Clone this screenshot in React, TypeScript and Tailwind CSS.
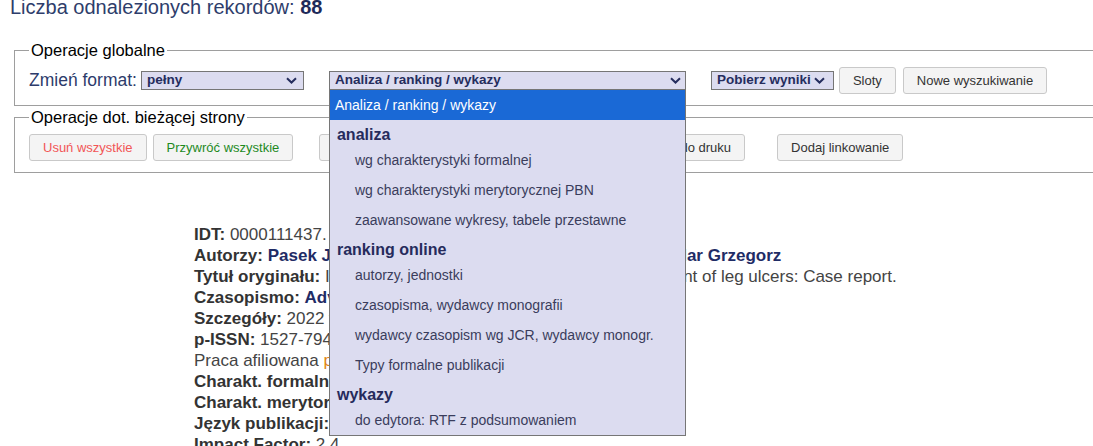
import React from "react";

const Chevron = ({ color = "#252d5e" }: { color?: string }) => (
  <svg width="11" height="7" viewBox="0 0 11 7" className="shrink-0">
    <path d="M1 1.2l4.5 4.3L10 1.2" fill="none" stroke={color} strokeWidth="2" />
  </svg>
);

const Button = ({ children, className = "", color = "text-[#333]" }: any) => (
  <button
    className={`h-[27px] whitespace-nowrap rounded-[3px] border border-[#c9c9c9] bg-[#f4f4f4] px-[13px] text-[13px] leading-none ${color} ${className}`}
  >
    {children}
  </button>
);

const Group = ({ label }: { label: string }) => (
  <div className="h-[25px] pl-[7px] pt-[6px] text-[16px] font-bold leading-[18px] text-[#262b5c]">
    {label}
  </div>
);

const Item = ({ label }: { label: string }) => (
  <div className="flex h-[30px] items-center pl-[25px] text-[14px] text-[#3a3d5c]">{label}</div>
);

const AnalizaSelect = () => (
  <div className="relative ml-[25px] w-[357px]">
    <div className="flex h-[19px] items-center justify-between border border-[#767676] bg-[#dcdcf0] pl-[5px] pr-[4px] text-[13.5px] font-bold text-[#252d5e]">
      <span>Analiza / ranking / wykazy</span>
      <Chevron />
    </div>
    <div className="absolute left-0 right-0 top-[18px] z-10 border border-[#767676] bg-[#dcdcf0]">
      <div className="flex h-[30px] items-center bg-[#1a69d6] pl-[5px] text-[14px] text-white">
        Analiza / ranking / wykazy
      </div>
      <Group label="analiza" />
      <Item label="wg charakterystyki formalnej" />
      <Item label="wg charakterystyki merytorycznej PBN" />
      <Item label="zaawansowane wykresy, tabele przestawne" />
      <Group label="ranking online" />
      <Item label="autorzy, jednostki" />
      <Item label="czasopisma, wydawcy monografii" />
      <Item label="wydawcy czasopism wg JCR, wydawcy monogr." />
      <Item label="Typy formalne publikacji" />
      <Group label="wykazy" />
      <Item label="do edytora: RTF z podsumowaniem" />
    </div>
  </div>
);

const Line = ({ children }: any) => <div className="whitespace-nowrap">{children}</div>;
const L = ({ children }: any) => <span className="font-bold text-[#333]">{children}</span>;

export default function App() {
  return (
    <div className="h-[446px] w-full overflow-hidden bg-white [font-family:Liberation_Sans,Arial,sans-serif]">
      <div className="-mt-[4px] pl-[10px] text-[20px] leading-[23px] text-[#2e3d6b]">
        Liczba odnalezionych rekordów: <span className="font-bold text-[#1e2a5a]">88</span>
      </div>

      <fieldset className="ml-[14px] mt-[22px] w-[1120px] border border-[#9e9e9e] pb-[11px] pl-[14px] pt-[7px]">
        <legend className="px-[2px] text-[16.5px] leading-[19px] text-black">Operacje globalne</legend>
        <div className="flex h-[27px] items-center">
          <span className="text-[17.5px] text-[#2d3b6b]">Zmień format:</span>
          <div className="ml-[4px] flex h-[19px] w-[163px] items-center justify-between border border-[#767676] bg-[#dcdcf0] pl-[5px] pr-[6px] text-[13.5px] font-bold text-[#252d5e]">
            <span>pełny</span>
            <Chevron />
          </div>
          <AnalizaSelect />
          <div className="ml-[25px] flex h-[19px] w-[123px] items-center justify-between border border-[#767676] bg-[#dcdcf0] pl-[5px] pr-[8px] text-[13.5px] font-bold text-[#252d5e]">
            <span>Pobierz wyniki</span>
            <Chevron />
          </div>
          <Button className="ml-[5px]">Sloty</Button>
          <Button className="ml-[7px]">Nowe wyszukiwanie</Button>
        </div>
      </fieldset>

      <fieldset className="ml-[14px] mt-[2px] w-[1120px] border border-[#9e9e9e] pb-[11px] pl-[14px] pt-[7px]">
        <legend className="px-[2px] text-[16.5px] leading-[19px] text-black">
          Operacje dot. bieżącej strony
        </legend>
        <div className="flex h-[27px] items-center">
          <Button color="text-[#f25656]">Usuń wszystkie</Button>
          <Button className="ml-[6px]" color="text-[#1f8a1f]">
            Przywróć wszystkie
          </Button>
          <Button className="ml-[26px]">Zaznacz wszystkie</Button>
          <Button className="ml-[167px]">Wersja do druku</Button>
          <Button className="ml-[32px]">Dodaj linkowanie</Button>
        </div>
      </fieldset>

      <div className="ml-[194px] mt-[51px] text-[17px] leading-[21px] text-[#444]">
        <Line>
          <L>IDT:</L> 0000111437.
        </Line>
        <Line>
          <L>Autorzy:</L>{" "}
          <span className="font-bold text-[#1f2c66]">
            Pasek Jarosław, Szajkowski Sebastian, Kos A, Cieślar Grzegorz
          </span>
        </Line>
        <Line>
          <L>Tytuł oryginału:</L> Innovative photodynamic therapy in the treatment of leg ulcers: Case report.
        </Line>
        <Line>
          <L>Czasopismo:</L> <span className="font-bold text-[#1f2c66]">Advances in Skin &amp; Wound Care</span>
        </Line>
        <Line>
          <L>Szczegóły:</L> 2022 vol. 35, nr 4, s. 1-4
        </Line>
        <Line>
          <L>p-ISSN:</L> 1527-7941, e-ISSN: 1538-8654
        </Line>
        <Line>
          Praca afiliowana <span className="text-[#e0861a]">przez uczelnię</span>
        </Line>
        <Line>
          <L>Charakt. formalna:</L> artykuł
        </Line>
        <Line>
          <L>Charakt. merytoryczna:</L> praca kazuistyczna
        </Line>
        <Line>
          <L>Język publikacji:</L> EN
        </Line>
        <Line>
          <L>Impact Factor:</L> 2.4
        </Line>
      </div>
    </div>
  );
}
